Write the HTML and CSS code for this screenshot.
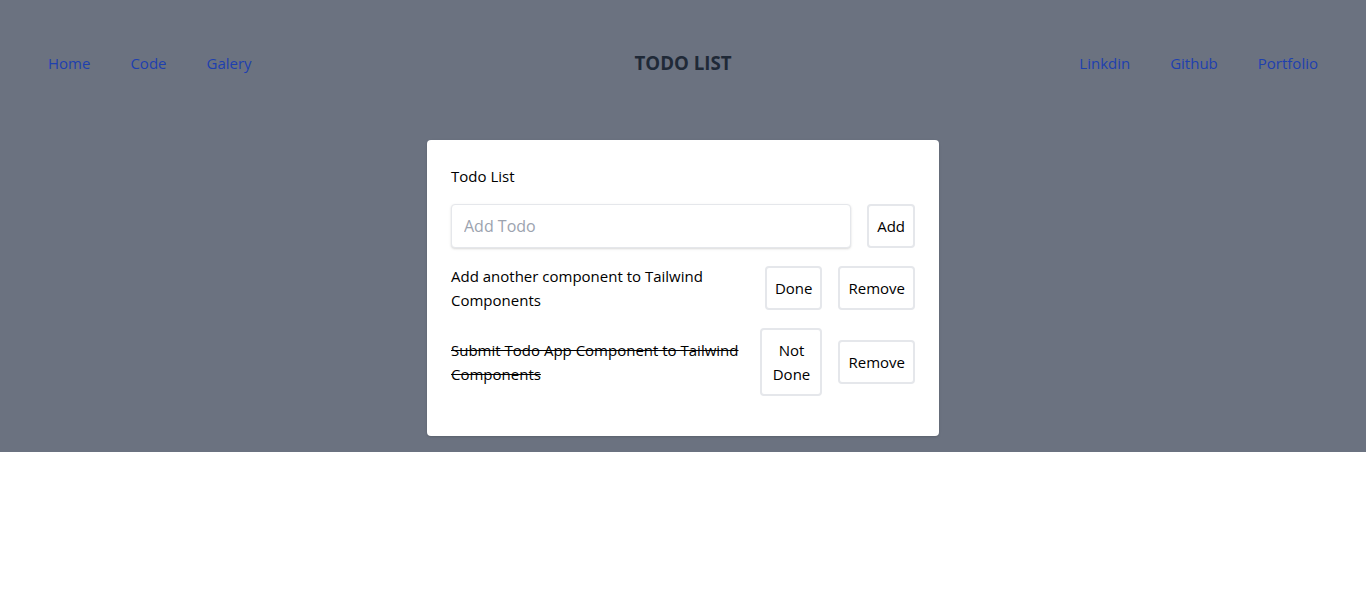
FILE: index.html
```html
<!DOCTYPE html>
<html lang="en">
<head>
<meta charset="utf-8">
<title>Todo List</title>
<link rel="stylesheet" href="styles.css">
</head>
<body>
<div class="hero">
  <nav class="nav">
    <div class="nav-links">
      <a href="#" class="nav-link">Home</a>
      <a href="#" class="nav-link">Code</a>
      <a href="#" class="nav-link">Galery</a>
    </div>
    <div class="nav-title">TODO LIST</div>
    <div class="nav-links nav-links-right">
      <a href="#" class="nav-link">Linkdin</a>
      <a href="#" class="nav-link">Github</a>
      <a href="#" class="nav-link">Portfolio</a>
    </div>
  </nav>
  <div class="card">
    <div class="card-head">
      <h1 class="card-title">Todo List</h1>
      <div class="add-row">
        <input class="todo-input" type="text" placeholder="Add Todo">
        <button class="btn btn-add">Add</button>
      </div>
    </div>
    <div class="todo-list">
      <div class="todo">
        <p class="todo-text">Add another component to Tailwind Components</p>
        <button class="btn btn-toggle">Done</button>
        <button class="btn btn-remove">Remove</button>
      </div>
      <div class="todo">
        <p class="todo-text todo-done">Submit Todo App Component to Tailwind Components</p>
        <button class="btn btn-toggle btn-undone">Not Done</button>
        <button class="btn btn-remove">Remove</button>
      </div>
    </div>
  </div>
</div>
</body>
</html>
```
FILE: styles.css
```css
* { box-sizing: border-box; }
html, body { margin: 0; padding: 0; }
body {
  font-family: "Open Sans", "Noto Sans", sans-serif;
  font-size: 15px;
  line-height: 24px;
  color: #000;
  background: #fff;
}
.hero {
  background: #6b7280;
  padding-bottom: 16px;
}
.nav {
  display: grid;
  grid-template-columns: 1fr auto 1fr;
  align-items: center;
  padding: 49px 48px 63px;
}
.nav-links {
  display: flex;
  gap: 40px;
}
.nav-links-right { justify-content: flex-end; }
.nav-link {
  color: #1e40af;
  text-decoration: none;
  font-size: 15px;
  line-height: 24px;
}
.nav-title {
  font-size: 18.7px;
  line-height: 28px;
  font-weight: 700;
  color: #1f2937;
}
.card {
  width: 512px;
  margin: 0 auto;
  padding: 24px;
  background: #fff;
  border-radius: 4px;
  box-shadow: 0 1px 3px 0 rgba(0,0,0,.1), 0 1px 2px 0 rgba(0,0,0,.06);
}
.card-head { margin-bottom: 16px; }
.card-title {
  margin: 0;
  font-size: 15px;
  line-height: 24px;
  font-weight: 400;
}
.add-row {
  display: flex;
  margin-top: 16px;
}
.todo-input {
  flex: 1;
  min-width: 0;
  height: 44px;
  margin-right: 16px;
  padding: 0 12px;
  border: 1px solid #e5e7eb;
  border-radius: 4px;
  box-shadow: 0 1px 3px 0 rgba(0,0,0,.1), 0 1px 2px 0 rgba(0,0,0,.06);
  font-family: inherit;
  font-size: 16px;
  color: #374151;
  outline: none;
}
.todo-input::placeholder { color: #9ca3af; }
.btn {
  flex-shrink: 0;
  padding: 8px;
  border: 2px solid #e5e7eb;
  border-radius: 4px;
  background: #fff;
  color: #000;
  font-family: inherit;
  font-size: 15px;
  line-height: 24px;
  cursor: pointer;
}
.todo {
  display: flex;
  align-items: center;
  margin-bottom: 16px;
}
.todo-text {
  flex: 1;
  margin: 0;
}
.todo-done { text-decoration: line-through; }
.btn-toggle {
  margin-left: 16px;
  margin-right: 8px;
}
.btn-undone { width: 62px; }
.btn-remove { margin-left: 8px; }
```
